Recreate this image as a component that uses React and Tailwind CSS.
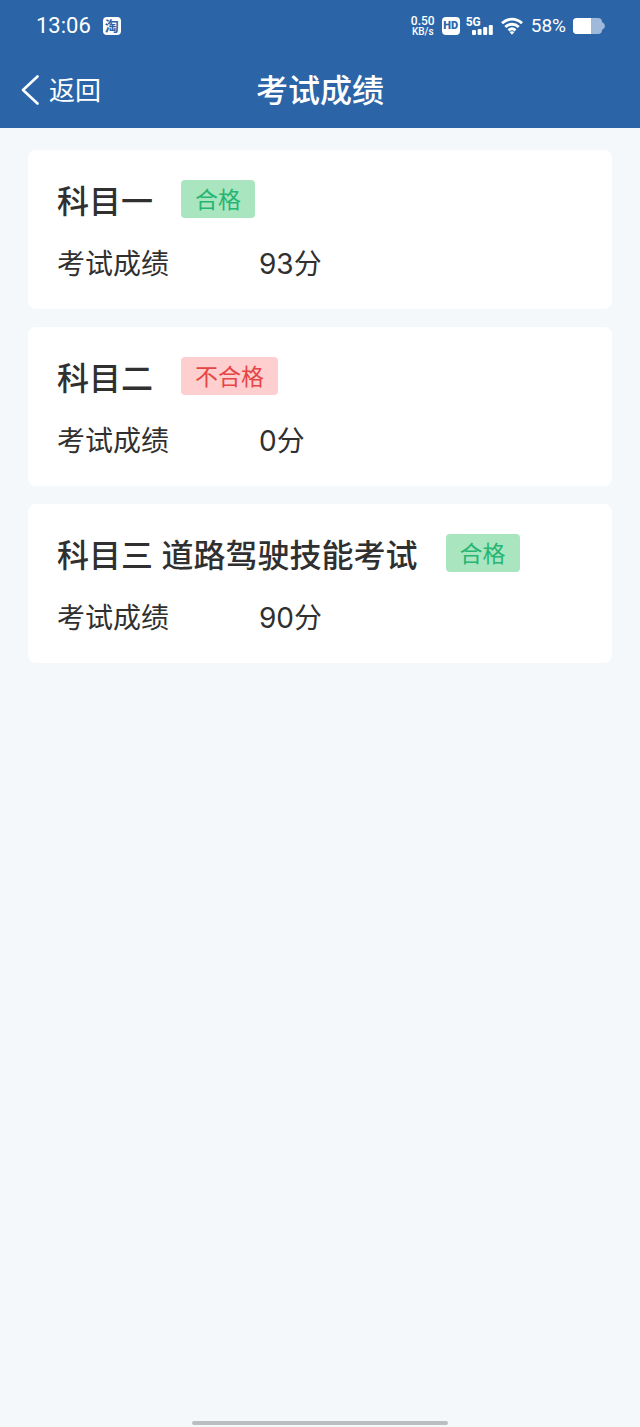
import React from 'react';

const results = [
  { subject: '科目一', passed: true, score: 93 },
  { subject: '科目二', passed: false, score: 0 },
  { subject: '科目三 道路驾驶技能考试', passed: true, score: 90 },
];

function StatusBar() {
  return (
    <div className="flex h-[52px] items-center justify-between pl-9 pr-[35px] font-['Roboto','Noto_Sans_CJK_SC',sans-serif]">
      <div className="flex items-center gap-3">
        <span className="text-[22px] leading-6">13:06</span>
        <span className="flex h-[18px] w-[18px] items-center justify-center rounded-[4px] bg-white text-[14px] leading-4 font-bold text-[#2b65a8]">淘</span>
      </div>
      <div className="flex items-center">
        <div className="mr-[7px] flex w-6 flex-col items-center whitespace-nowrap font-medium">
          <span className="text-[12px] leading-[11px]">0.50</span>
          <span className="text-[10px] leading-[9px]">KB/s</span>
        </div>
        <span className="mr-1.5 flex h-[18px] w-[18px] items-center justify-center rounded-[4px] bg-white text-[11px] leading-3 font-black text-[#2b65a8]">HD</span>
        <div className="mr-2 flex w-[27px] flex-col">
          <span className="text-[12px] leading-[10px] font-bold">5G</span>
          <svg className="-mt-0.5 self-end" width="21" height="10" viewBox="0 0 21 10" fill="currentColor" aria-hidden="true">
            <rect x="0" y="5" width="4" height="5" rx="1" />
            <rect x="5.6" y="4" width="4" height="6" rx="1" />
            <rect x="11.2" y="2" width="4" height="8" rx="1" />
            <rect x="16.8" y="0" width="4" height="10" rx="1" />
          </svg>
        </div>
        <svg className="mr-2" width="22" height="18" viewBox="0 0 22 18" fill="none" stroke="currentColor" strokeWidth="2.9" aria-hidden="true">
          <path d="M1 6.2C6.8 0.7 15.2 0.7 21 6.2" />
          <path d="M4.3 10C8.2 6.3 13.8 6.3 17.7 10" />
          <path d="M7.5 13.4C9.6 11.5 12.4 11.5 14.5 13.4" />
          <path d="M8.6 15.1C10 13.9 12 13.9 13.4 15.1L11 17.7Z" fill="currentColor" stroke="none" />
        </svg>
        <span className="mr-[7px] text-[19px] leading-6">58%</span>
        <svg width="32" height="16" viewBox="0 0 32 16" aria-hidden="true">
          <path d="M4 0H25Q29 0 29 4Q32 5.500 32 8Q32 10.500 29 12Q29 16 25 16H4Q0 16 0 12V4Q0 0 4 0Z" fill="#9fb9da" />
          <path d="M4 0H18V16H4Q0 16 0 12V4Q0 0 4 0Z" fill="#fff" />
        </svg>
      </div>
    </div>
  );
}

function NavBar() {
  return (
    <div className="grid h-[76px] grid-cols-[1fr_auto_1fr] items-center px-[21px] font-['Noto_Sans','Noto_Sans_CJK_SC',sans-serif]">
      <button type="button" className="flex items-center gap-2.5 justify-self-start text-[26px] leading-9">
        <svg width="18" height="30" viewBox="0 0 18 30" fill="none" stroke="currentColor" strokeWidth="2.6" strokeLinecap="round" strokeLinejoin="round" aria-hidden="true">
          <path d="M16.5 1.500L2 15L16.500 28.500" />
        </svg>
        返回
      </button>
      <h1 className="text-[32px] leading-10 font-medium">考试成绩</h1>
    </div>
  );
}

function ResultCard({ subject, passed, score }) {
  return (
    <section className="rounded-lg bg-white px-[29px] pt-[30px] pb-[23px]">
      <div className="flex items-start gap-7">
        <h2 className="text-[32px] leading-[44px] font-medium">{subject}</h2>
        <span
          className={`h-[38px] rounded-[4px] px-3.5 text-[23px] leading-[40px] ${
            passed ? 'bg-[#a9e6c0] text-[#27b573]' : 'bg-[#ffcfcf] text-[#e64545]'
          }`}
        >
          {passed ? '合格' : '不合格'}
        </span>
      </div>
      <dl className="mt-[18px] flex text-[28px] leading-[44px]">
        <dt className="w-[202px]">考试成绩</dt>
        <dd>{score}分</dd>
      </dl>
    </section>
  );
}

function App() {
  return (
    <div className="flex min-h-screen flex-col bg-[#f4f8fa] font-['Inter','Noto_Sans_CJK_SC',sans-serif] text-[#303030]">
      <header className="bg-[#2b65a8] text-white">
        <StatusBar />
        <NavBar />
      </header>
      <main className="flex flex-1 flex-col gap-[18px] px-7 pt-[22px]">
        {results.map((item) => (
          <ResultCard key={item.subject} {...item} />
        ))}
      </main>
      <div className="mx-auto mb-0.5 h-1 w-2/5 rounded-full bg-[#babebf]" />
    </div>
  );
}

export default App;
